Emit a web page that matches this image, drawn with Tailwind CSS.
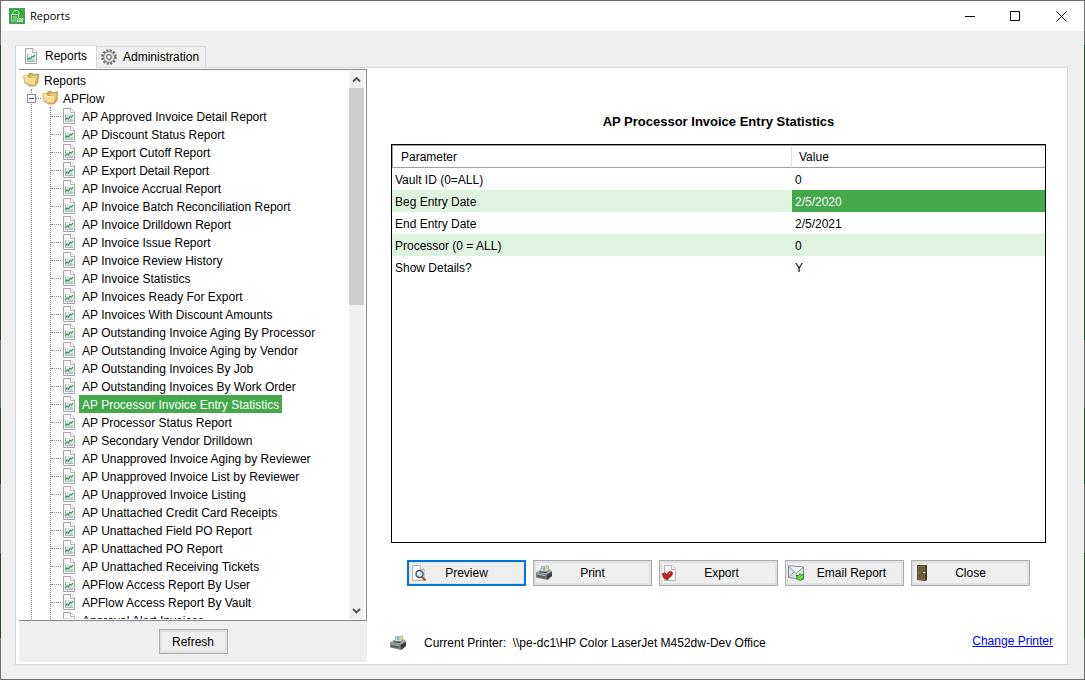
<!DOCTYPE html>
<html lang="en">
<head>
<meta charset="utf-8">
<meta name="viewport" content="width=device-width, initial-scale=1">
<title>Reports</title>
<script src="https://cdn.jsdelivr.net/npm/@tailwindcss/browser@4"></script>
</head>
<body class="bg-[#efefef] font-['Liberation_Sans',Arial,sans-serif] text-xs text-black">

<svg class="hidden" aria-hidden="true">
  <symbol id="doc" viewBox="0 0 16 16">
    <path d="M2.500.500h7.500l3.500 3.500v11.500h-11z" fill="#fafafa" stroke="#a3a3a3"/>
    <path d="M9.500.500v4h4" fill="#fff" stroke="#b5b5b5"/>
    <path d="M4 6h8v8H4z" fill="#dbe9ef"/>
    <path d="M7 11h5v3H7z" fill="#b5d8ea"/>
    <path d="M4.500 6v8" stroke="#a5b1b6" fill="none"/>
    <path d="M4 13.500h8" stroke="#a9b8bf" fill="none"/>
    <path d="M4.500 12l1.500-2 1.500 1 1.500-2.500 1.500.500 1.500-2" stroke="#3c9a3c" stroke-width="1.200" fill="none"/>
  </symbol>
  <symbol id="folder" viewBox="0 0 16 16">
    <path d="M5 3.500L6 1.500h3.500L10.500 3 15.500 1.800 15 10.500 12 14H6z" fill="#dca94e" stroke="#b58836" stroke-width=".7"/>
    <path d="M7 4.500L14.500 3 14 9l-2 1z" fill="#f4d48a"/>
    <path d="M.5 3.800L4.500 3.500 6 6l7-.8-.5 8.500-7.500-.5L1.800 11z" fill="#f7dc97" stroke="#c39645" stroke-width=".7"/>
    <path d="M1.200 4.500L4 4.300 5.500 6.800l7-.7" fill="none" stroke="#fff4d2" stroke-width=".8"/>
    <path d="M3 11l3 1.500 6 .3" fill="none" stroke="#e0b05a" stroke-width=".8"/>
  </symbol>
  <symbol id="gear" viewBox="0 0 16 16">
    <circle cx="8" cy="8" r="6.500" fill="none" stroke="#6b6b6b" stroke-width="2.600" stroke-dasharray="2 1.400"/>
    <circle cx="8" cy="8" r="5.500" fill="#c6c6c6" stroke="#808080" stroke-width=".8"/>
    <circle cx="8" cy="8" r="4" fill="none" stroke="#e6e6e6" stroke-width="1.200"/>
    <circle cx="8" cy="8" r="2.300" fill="#f5f5f5" stroke="#5c5c5c"/>
  </symbol>
  <symbol id="preview" viewBox="0 0 16 16">
    <path d="M1.500.500h8l3.500 3.500v11.500h-11.500z" fill="#fbfbfb" stroke="#b4b4b4"/>
    <path d="M9.500.500v4h4" fill="#fff" stroke="#b5b5b5"/>
    <path d="M11 12l3.500 3.500" stroke="#8f6430" stroke-width="2.400"/>
    <circle cx="8.500" cy="9" r="3.500" fill="#cfe6f4" stroke="#4f5a62" stroke-width="1.500"/>
    <path d="M6.700 9a1.800 1.800 0 0 1 1.800-1.800" stroke="#fff" fill="none"/>
  </symbol>
  <symbol id="printer" viewBox="0 0 16 16">
    <path d="M0 7.500L4 5l10-.5 2 2v4.500l-5 4L0 12.500z" fill="#7d8282"/>
    <path d="M10.500 9.500L16 6.500V11l-5 4z" fill="#3a3f3f"/>
    <path d="M0 7.500l4-2.500 10-.5 2 2-5.500 3z" fill="#a7acac"/>
    <path d="M3 7.200L5 6l8-.5-3 2.500z" fill="#2f3434"/>
    <path d="M.8 9.300l8.700 1.500v2.800l-8.700-1.800z" fill="#5a6060"/>
    <path d="M1 9.200l8.500 1.500" stroke="#cdd1d1" stroke-width=".7"/>
    <path d="M5.500 1.500L12.500 1l-.8 5.500-6.700-.3z" fill="#eef3f6" stroke="#8b9090" stroke-width=".7"/>
    <path d="M6.500 2.200l3-.2v3.200l-3 .3z" fill="#76b6dc"/>
    <path d="M9.500 2h2l-.5 3.500H9z" fill="#e5c86a"/>
  </symbol>
  <symbol id="export" viewBox="0 0 16 16">
    <path d="M2.500.500h7.500l3.500 3.500v11.500h-11z" fill="#fbfbfb" stroke="#b4b4b4"/>
    <path d="M9.500.500v4h4" fill="#fff" stroke="#b5b5b5"/>
    <path d="M.4 8.500l2.300-.4L5 9.500l1-2L8.500 6.200l2 1.300-.5 3-2.500 2L5 15 1.500 12.500z" fill="#c92424" stroke="#861818" stroke-width=".8"/>
    <path d="M7 8.800l1.500-1" stroke="#ee8080" fill="none"/>
  </symbol>
  <symbol id="mail" viewBox="0 0 16 16">
    <path d="M.5.800L15.500 2v12.500L.5 12.500z" fill="#dfe3e4" stroke="#80888a"/>
    <path d="M1 1.500l7 7L15 2.500" fill="#f3f5f5" stroke="#80888a" stroke-width=".9"/>
    <path d="M1 12l5-5" stroke="#9aa2a4" stroke-width=".9"/>
    <path d="M8 10l2.200.8L12 8.800l1.500 1.500 2-1.500v4l-3 3L9.500 14z" fill="#6ad644" stroke="#2b7d20" stroke-width=".9"/>
  </symbol>
  <symbol id="door" viewBox="0 0 16 16">
    <path d="M3 0h10v15l-2 1-8-1z" fill="#54452f"/>
    <path d="M4 1h7v14l-7-.6z" fill="#87704a"/>
    <path d="M5.500 2.500h4v4.500h-4zM5.500 8.500h4v4.500h-4z" fill="#765f3b" stroke="#5a4a30" stroke-width=".8"/>
    <path d="M11 1h2v14l-2 .7z" fill="#3f3527"/>
    <path d="M9 7.500h2.500" stroke="#e6dcc0"/>
  </symbol>
</svg>

<div class="flex min-h-screen flex-col bg-[linear-gradient(#6e6e6e_45px,#2b4a2f_45px,#2b4a2f_340px,#6e6e6e_340px,#6e6e6e_408px,#2b4a2f_408px,#2b4a2f_484px,#6e6e6e_484px,#6e6e6e_553px,#2b4a2f_553px,#2b4a2f_638px,#6e6e6e_638px)] p-px">
  <header class="flex h-[30px] items-center bg-white pl-2">
    <svg class="size-4" viewBox="0 0 16 16" aria-hidden="true">
      <path d="M0 0h16v16H0z" fill="#3fa648"/>
      <path d="M2.500 13V6.500h7V13zM4 6.500v-2l1.500-2h3l1.500 2v2M4 9h4M4 11h3" fill="none" stroke="#b9e6bd" stroke-width=".9"/>
      <path d="M7 9.500h7.500v4.500H7z" fill="#3fa648"/>
      <path d="M7.500 13.500h6.500M7.500 10.500h1.500v2H7.500M10 10.500h1.500v2H10zM12.500 10.500H14v2h-1.500z" fill="none" stroke="#d9f5db" stroke-width=".8"/>
    </svg>
    <h1 class="flex-1 pl-[5px] font-['Open_Sans','Noto_Sans',sans-serif] text-[11px]">Reports</h1>
    <button aria-label="Minimize" class="flex h-full w-[46px] items-center justify-center"><svg class="size-[11px]" viewBox="0 0 11 11"><path d="M1 5.500h10" stroke="#000"/></svg></button>
    <button aria-label="Maximize" class="flex h-full w-[46px] items-center justify-center"><svg class="size-[11px]" viewBox="0 0 11 11"><path d="M.5.500h9v9h-9z" fill="none" stroke="#000"/></svg></button>
    <button aria-label="Close window" class="flex h-full w-[46px] items-center justify-center"><svg class="size-[11px]" viewBox="0 0 11 11"><path d="M.5.500l10 10M10.500.500l-10 10" stroke="#000"/></svg></button>
  </header>

  <main class="flex flex-1 flex-col bg-[#efefef] px-[14px] pt-[14px] pr-4 pb-[14px]">
    <div role="tablist" class="z-10 -mb-px flex items-end">
      <button role="tab" aria-selected="true" class="flex h-[23px] items-center gap-[6px] border border-b-0 border-[#d9d9d9] bg-white pr-[9px] pb-[2px] pl-[7px]"><svg class="size-4"><use href="#doc"/></svg>Reports</button>
      <button role="tab" aria-selected="false" class="mb-px flex h-[21px] items-center gap-[6px] border border-b-0 border-l-0 border-[#d9d9d9] bg-[#f0f0f0] pr-[6px] pl-1"><svg class="size-4"><use href="#gear"/></svg>Administration</button>
    </div>
    <div role="tabpanel" class="flex flex-1 border border-[#d9d9d9] bg-white pt-px pb-[2px] pl-[3px]">
      <aside class="flex w-[348px] shrink-0 flex-col bg-[#efefef]">
        <div class="flex h-[552px] border-y border-r border-[#828790] bg-white py-px pr-[2px]">
          <nav aria-label="Report list" class="flex-1 overflow-hidden whitespace-nowrap">
            <div class="flex h-[18px] items-center gap-[2px] pl-1"><svg class="size-4"><use href="#folder"/></svg><span class="h-[18px] px-[3px] pt-px leading-[18px]">Reports</span></div>
            <ul class="ml-3 border-l border-dotted border-[#808080]">
              <li>
                <div class="-ml-[5px] flex h-[18px] items-center">
                  <button aria-label="Collapse APFlow" class="flex size-[9px] items-center justify-center border border-[#919191] bg-white"><span class="h-px w-[5px] bg-[#2f4f9f]"></span></button>
                  <span class="mr-px w-[5px] border-t border-dotted border-[#808080]"></span>
                  <svg class="mr-[2px] size-4"><use href="#folder"/></svg><span class="h-[18px] px-[3px] pt-px leading-[18px]">APFlow</span>
                </div>
                <ul id="reports" class="ml-[18px] border-l border-dotted border-[#808080]"></ul>
              </li>
            </ul>
          </nav>
          <div class="flex w-[15px] flex-col bg-[#f0f0f0]" aria-hidden="true">
            <svg class="h-[17px] w-[15px]" viewBox="0 0 15 17"><path d="M4 10.500L7.500 7l3.500 3.500" fill="none" stroke="#505050" stroke-width="1.800"/></svg>
            <div class="h-[217px] bg-[#cdcdcd]"></div>
            <svg class="mt-auto h-[17px] w-[15px]" viewBox="0 0 15 17"><path d="M4 7l3.500 3.500L11 7" fill="none" stroke="#505050" stroke-width="1.800"/></svg>
          </div>
        </div>
        <div class="flex flex-1 items-center justify-center">
          <button class="h-[25px] w-[69px] border border-[#adadad] bg-[#efefef] shadow-[inset_0_0_0_2px_#e1e1e1]">Refresh</button>
        </div>
      </aside>

      <section class="flex flex-1 flex-col pt-11 pr-[21px] pl-6">
        <h2 class="text-center text-[13px] leading-[18px] font-bold">AP Processor Invoice Entry Statistics</h2>
        <div class="mt-[13px] h-[399px] border border-black">
          <table class="w-full table-fixed border-separate border-spacing-0 text-left">
            <colgroup><col class="w-[400px]"><col></colgroup>
            <thead>
              <tr class="h-[23px]">
                <th class="border-y border-r border-l border-y-[#a0a0a0] border-r-[#e0e0e0] border-l-[#a0a0a0] py-0 pl-2 font-normal">Parameter</th>
                <th class="border-y border-[#a0a0a0] py-0 pl-[7px] font-normal">Value</th>
              </tr>
            </thead>
            <tbody>
              <tr class="h-[22px]"><td class="pt-[2px] pl-[3px]">Vault ID (0=ALL)</td><td class="pt-[2px] pl-[3px]">0</td></tr>
              <tr class="h-[22px] bg-[#def3e0]"><td class="pt-[2px] pl-[3px]">Beg Entry Date</td><td class="bg-[#43a94b] pt-[2px] pl-[3px] text-white">2/5/2020</td></tr>
              <tr class="h-[22px]"><td class="pt-[2px] pl-[3px]">End Entry Date</td><td class="pt-[2px] pl-[3px]">2/5/2021</td></tr>
              <tr class="h-[22px] bg-[#def3e0]"><td class="pt-[2px] pl-[3px]">Processor (0 = ALL)</td><td class="pt-[2px] pl-[3px]">0</td></tr>
              <tr class="h-[22px]"><td class="pt-[2px] pl-[3px]">Show Details?</td><td class="pt-[2px] pl-[3px]">Y</td></tr>
            </tbody>
          </table>
        </div>
        <div class="mt-[17px] flex gap-[7px] pl-4">
          <button class="flex h-[26px] w-[119px] items-center border-2 border-[#0078d7] bg-[#efefef] pr-[18px] pl-[2px] shadow-[inset_0_0_0_1px_#e1e1e1]"><svg class="size-4"><use href="#preview"/></svg><span class="flex-1">Preview</span></button>
          <button class="flex h-[26px] w-[119px] items-center border border-[#adadad] bg-[#efefef] pr-[18px] pl-[2px] shadow-[inset_0_0_0_2px_#e1e1e1]"><svg class="size-4"><use href="#printer"/></svg><span class="flex-1">Print</span></button>
          <button class="flex h-[26px] w-[119px] items-center border border-[#adadad] bg-[#efefef] pr-3 pl-[2px] shadow-[inset_0_0_0_2px_#e1e1e1]"><svg class="size-4"><use href="#export"/></svg><span class="flex-1">Export</span></button>
          <button class="flex h-[26px] w-[119px] items-center border border-[#adadad] bg-[#efefef] pr-1 pl-[2px] shadow-[inset_0_0_0_2px_#e1e1e1]"><svg class="size-4"><use href="#mail"/></svg><span class="flex-1">Email Report</span></button>
          <button class="flex h-[26px] w-[119px] items-center border border-[#adadad] bg-[#efefef] pr-[18px] pl-[2px] shadow-[inset_0_0_0_2px_#e1e1e1]"><svg class="size-4"><use href="#door"/></svg><span class="flex-1">Close</span></button>
        </div>
        <div class="mt-[47px] -mr-[7px] flex items-start justify-between">
          <p class="flex items-center pt-[2px] whitespace-pre"><svg class="mr-[18px] -ml-px size-4"><use href="#printer"/></svg>Current Printer:  \\pe-dc1\HP Color LaserJet M452dw-Dev Office</p>
          <a href="#" class="text-[#0000ff] underline">Change Printer</a>
        </div>
      </section>
    </div>
  </main>
</div>

<script>
const reports = ["AP Approved Invoice Detail Report","AP Discount Status Report","AP Export Cutoff Report","AP Export Detail Report","AP Invoice Accrual Report","AP Invoice Batch Reconciliation Report","AP Invoice Drilldown Report","AP Invoice Issue Report","AP Invoice Review History","AP Invoice Statistics","AP Invoices Ready For Export","AP Invoices With Discount Amounts","AP Outstanding Invoice Aging By Processor","AP Outstanding Invoice Aging by Vendor","AP Outstanding Invoices By Job","AP Outstanding Invoices By Work Order","AP Processor Invoice Entry Statistics","AP Processor Status Report","AP Secondary Vendor Drilldown","AP Unapproved Invoice Aging by Reviewer","AP Unapproved Invoice List by Reviewer","AP Unapproved Invoice Listing","AP Unattached Credit Card Receipts","AP Unattached Field PO Report","AP Unattached PO Report","AP Unattached Receiving Tickets","APFlow Access Report By User","APFlow Access Report By Vault","Approval Alert Invoices"];
const selected = "AP Processor Invoice Entry Statistics";
document.getElementById("reports").innerHTML = reports.map(name => `
  <li class="flex h-[18px] items-center">
    <span class="w-[10px] border-t border-dotted border-[#808080]"></span>
    <svg class="mr-[2px] size-4"><use href="#doc"/></svg>
    <span class="${name === selected ? "h-[18px] bg-[#43a94b] px-[3px] pt-px leading-[18px] text-white" : "h-[18px] px-[3px] pt-px leading-[18px]"}">${name}</span>
  </li>`).join("");
</script>
</body>
</html>
